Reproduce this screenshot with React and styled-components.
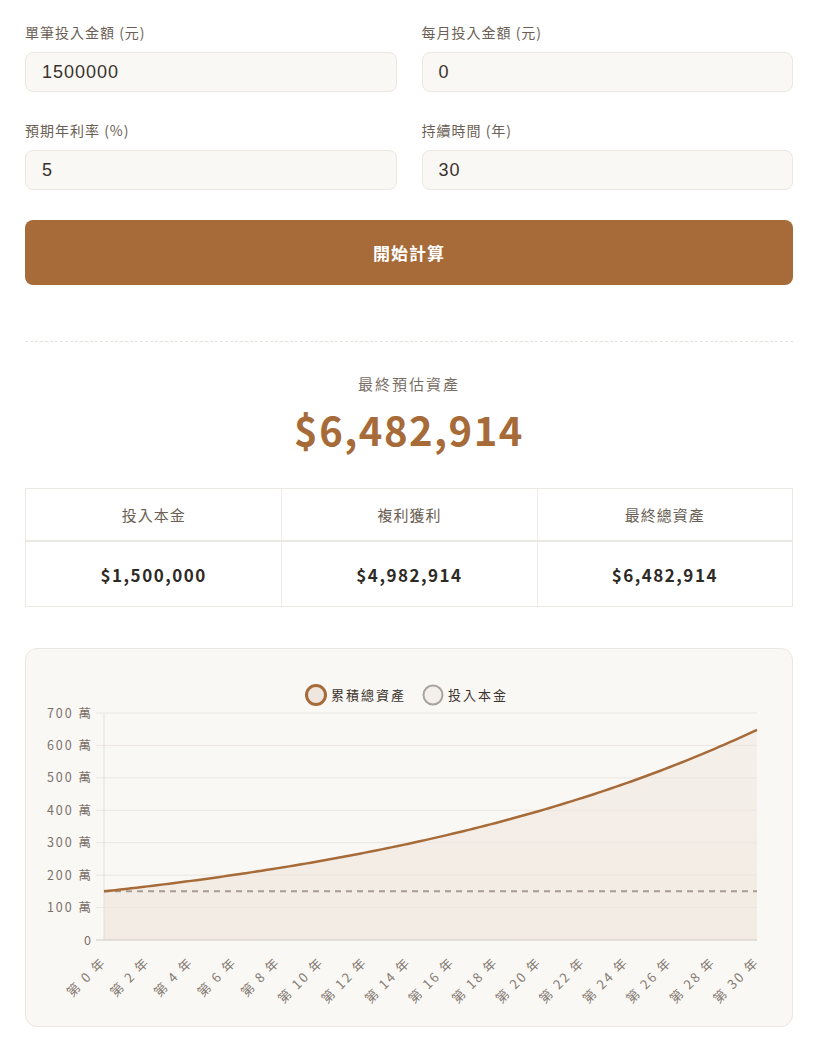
import React from "react";
import styled, { createGlobalStyle } from "styled-components";

const GlobalStyle = createGlobalStyle`
  html, body { margin: 0; padding: 0; background: #ffffff; }
  body { font-family: "Noto Sans CJK TC", "Noto Sans", sans-serif; }
  * { box-sizing: border-box; }
`;

const Page = styled.div`
  width: 819px;
  padding: 22px 26px 19px 25px;
`;

const FormGrid = styled.div`
  display: grid;
  grid-template-columns: 1fr 1fr;
  column-gap: 25px;
  row-gap: 28px;
`;

const Field = styled.label`
  display: flex;
  flex-direction: column;
  gap: 10px;
`;

const Label = styled.span`
  font-size: 14px;
  line-height: 20px;
  color: #6b5f55;
  letter-spacing: 1px;
`;

const Input = styled.input`
  height: 40px;
  width: 100%;
  border: 1px solid #ece7e0;
  border-radius: 8px;
  background: #faf8f4;
  padding: 0 16px;
  font-family: "Liberation Sans", Arial, sans-serif;
  font-size: 18px;
  letter-spacing: 1px;
  color: #3a332d;
  outline: none;
`;

const CalcButton = styled.button`
  margin-top: 30px;
  width: 100%;
  height: 65px;
  border: none;
  border-radius: 8px;
  background: #a66b38;
  color: #ffffff;
  font-family: "Noto Sans CJK TC", sans-serif;
  font-weight: 700;
  font-size: 17px;
  letter-spacing: 1px;
  cursor: pointer;
`;

const Divider = styled.hr`
  margin: 56px 0 0;
  border: none;
  border-top: 1px dashed #e6e1db;
`;

const Summary = styled.section`
  margin-top: 31px;
  display: flex;
  flex-direction: column;
  align-items: center;
  gap: 6px;
`;

const SummaryLabel = styled.div`
  font-size: 15px;
  line-height: 22px;
  letter-spacing: 2px;
  color: #7a6f66;
`;

const BigNumber = styled.div`
  font-size: 40px;
  line-height: 56px;
  font-weight: 700;
  letter-spacing: 1.5px;
  color: #a66b38;
`;

const Table = styled.div`
  margin-top: 31px;
  display: grid;
  grid-template-columns: repeat(3, 1fr);
  border: 1px solid #ece8e4;
`;

const HeadCell = styled.div`
  height: 53px;
  display: flex;
  align-items: center;
  justify-content: center;
  font-size: 15px;
  letter-spacing: 1px;
  color: #6b5f55;
  border-bottom: 2px solid #ebe7e2;
  border-left: ${(p) => (p.$first ? "none" : "1px solid #efebe7")};
`;

const ValueCell = styled.div`
  height: 64px;
  display: flex;
  align-items: center;
  justify-content: center;
  font-size: 17px;
  font-weight: 700;
  letter-spacing: 1.5px;
  color: #2d2925;
  border-left: ${(p) => (p.$first ? "none" : "1px solid #efebe7")};
`;

const ChartCard = styled.div`
  margin-top: 41px;
  border: 1px solid #ece7e0;
  border-radius: 12px;
  background: #faf8f5;
  height: 379px;
  overflow: hidden;
`;

const ChartSvg = styled.svg`
  display: block;
  font-family: "Noto Sans CJK TC", "Noto Sans", sans-serif;
`;

const X0 = 78;
const X1 = 731;
const Y0 = 291;
const PER = (291 - 64) / 700;
const xOf = (t) => X0 + (t / 30) * (X1 - X0);
const yOf = (v) => Y0 - v * PER;

function Chart() {
  const pts = [];
  for (let i = 0; i <= 120; i++) {
    const t = i / 4;
    pts.push([xOf(t), yOf(150 * Math.pow(1.05, t))]);
  }
  const line = pts.map((p, i) => `${i ? "L" : "M"}${p[0].toFixed(2)} ${p[1].toFixed(2)}`).join(" ");
  const area = `${line} L${X1} ${Y0} L${X0} ${Y0} Z`;
  const ticks = [0, 100, 200, 300, 400, 500, 600, 700];
  const years = Array.from({ length: 16 }, (_, i) => i * 2);
  return (
    <ChartSvg width="766" height="377" viewBox="0 0 766 377">
      <defs>
        <linearGradient id="fillGrad" x1="0" y1="0" x2="0" y2="1">
          <stop offset="0" stopColor="#a66b38" stopOpacity="0.06" />
          <stop offset="1" stopColor="#a66b38" stopOpacity="0.09" />
        </linearGradient>
      </defs>
      <circle cx="290" cy="46" r="9.5" fill="#efe7df" stroke="#a66b38" strokeWidth="3" />
      <text x="305" y="51" fontSize="13" letterSpacing="2" fill="#3a332d">累積總資產</text>
      <circle cx="407" cy="46" r="9.5" fill="#f3f0ec" stroke="#aaa39d" strokeWidth="2" />
      <text x="422" y="51" fontSize="13" letterSpacing="2" fill="#3a332d">投入本金</text>

      <path d={area} fill="url(#fillGrad)" />

      {ticks.map((v) => (
        <g key={v}>
          <line x1="70" x2={X1} y1={yOf(v)} y2={yOf(v)} stroke={v === 0 ? "#cfc8c0" : "#ebe6df"} strokeWidth="1" />
          <text x="67" y={yOf(v) + 4.5} fontSize="12.5" letterSpacing="2" textAnchor="end" fill="#7a716a">
            {v === 0 ? "0" : `${v} 萬`}
          </text>
        </g>
      ))}
      <line x1={X0} x2={X0} y1="64" y2={Y0} stroke="#e4ded7" strokeWidth="1" />

      <line x1={X0} x2={X1} y1={yOf(150)} y2={yOf(150)} stroke="#a89c92" strokeWidth="2" strokeDasharray="6 5" />
      <path d={line} fill="none" stroke="#a66b38" strokeWidth="2.5" strokeLinejoin="round" />

      {years.map((t) => {
        const x = xOf(t) + 3;
        const y = 314;
        return (
          <text
            key={t}
            x={x}
            y={y}
            fontSize="13"
            letterSpacing="2"
            textAnchor="end"
            fill="#857b73"
            transform={`rotate(-45 ${x} ${y})`}
          >
            {`第 ${t} 年`}
          </text>
        );
      })}
    </ChartSvg>
  );
}

export default function App() {
  const fields = [
    ["單筆投入金額 (元)", "1500000"],
    ["每月投入金額 (元)", "0"],
    ["預期年利率 (%)", "5"],
    ["持續時間 (年)", "30"],
  ];
  const heads = ["投入本金", "複利獲利", "最終總資產"];
  const values = ["$1,500,000", "$4,982,914", "$6,482,914"];
  return (
    <>
      <GlobalStyle />
      <Page>
        <FormGrid>
          {fields.map(([l, v]) => (
            <Field key={l}>
              <Label>{l}</Label>
              <Input defaultValue={v} />
            </Field>
          ))}
        </FormGrid>
        <CalcButton>開始計算</CalcButton>
        <Divider />
        <Summary>
          <SummaryLabel>最終預估資產</SummaryLabel>
          <BigNumber>$6,482,914</BigNumber>
        </Summary>
        <Table>
          {heads.map((h, i) => (
            <HeadCell key={h} $first={i === 0}>{h}</HeadCell>
          ))}
          {values.map((v, i) => (
            <ValueCell key={v} $first={i === 0}>{v}</ValueCell>
          ))}
        </Table>
        <ChartCard>
          <Chart />
        </ChartCard>
      </Page>
    </>
  );
}
